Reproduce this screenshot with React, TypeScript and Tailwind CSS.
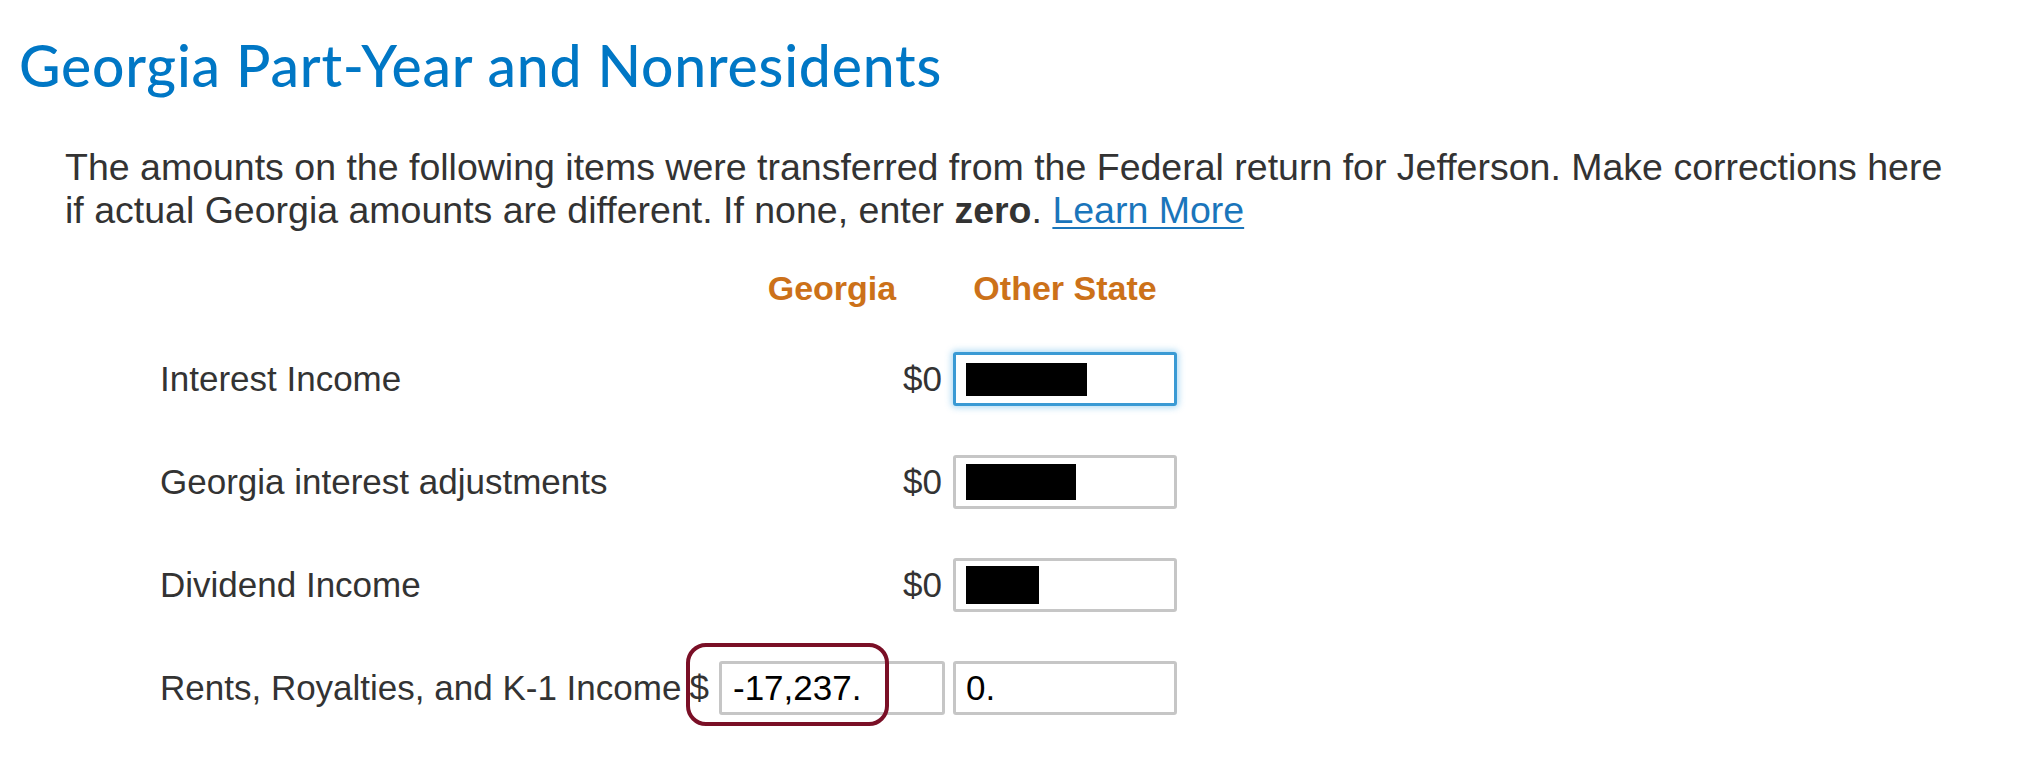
import React from "react";

const rows = [
  { label: "Interest Income", redact: "w-[121px] h-[33px]" },
  { label: "Georgia interest adjustments", redact: "w-[110px] h-[36px]" },
  { label: "Dividend Income", redact: "w-[73px] h-[38px]" },
];

function Box({ focused, children }: { focused?: boolean; children?: React.ReactNode }) {
  return (
    <div
      className={
        focused
          ? "flex h-[54px] w-[224px] items-center rounded-[3px] border-[3px] border-[#3a9ad4] bg-white pl-[10px] shadow-[0_0_6px_2px_rgba(90,180,230,0.45)]"
          : "flex h-[54px] w-[224px] items-center rounded-[3px] border-[3px] border-[#c6c6c6] bg-white pl-[10px] text-[35px] text-black"
      }
    >
      {children}
    </div>
  );
}

export default function App() {
  return (
    <div className="min-h-[757px] bg-white font-['Liberation_Sans',Arial,sans-serif] text-[#333]">
      <h1 className="pl-[19px] pt-[32px] font-['Lato',sans-serif] text-[57px] font-medium leading-[67px] tracking-[0.8px] text-[#0077c5]">
        Georgia Part-Year and Nonresidents
      </h1>

      <p className="mt-[47px] w-[1955px] pl-[65px] text-[37.5px] leading-[43px]">
        The amounts on the following items were transferred from the Federal return for Jefferson. Make corrections here if
        actual Georgia amounts are different. If none, enter <b className="font-bold">zero</b>.{" "}
        <a href="#" className="text-[#1a75bb] underline decoration-2 underline-offset-[4px]">
          Learn More
        </a>
      </p>

      <div className="mt-[33px] grid grid-cols-[519px_258px_224px] gap-x-[8px] gap-y-[49px] pl-[160px] text-[35px] leading-[54px]">
        <div className="h-[38px]" />
        <div className="flex h-[38px] justify-end">
          <div className="w-[226px] text-center text-[34px] font-bold leading-[46px] text-[#cc7119]">Georgia</div>
        </div>
        <div className="h-[38px] text-center text-[34px] font-bold leading-[46px] text-[#cc7119]">Other State</div>

        {rows.map((r, i) => (
          <React.Fragment key={r.label}>
            <div className="whitespace-nowrap">{r.label}</div>
            <div className="pr-[3px] text-right">$0</div>
            <Box focused={i === 0}>
              <div className={`${r.redact} bg-black`} />
            </Box>
          </React.Fragment>
        ))}

        <div className="whitespace-nowrap">Rents, Royalties, and K-1 Income</div>
        <div className="relative flex items-center justify-end gap-[10px]">
          <span>$</span>
          <div className="flex h-[54px] w-[226px] items-center rounded-[3px] border-[3px] border-[#c6c6c6] bg-white pl-[11px] text-black">
            -17,237.
          </div>
          <div className="pointer-events-none absolute left-[-1px] top-[-18px] h-[83px] w-[203px] rounded-[20px] border-[4px] border-[#7a0f26]" />
        </div>
        <Box>0.</Box>
      </div>
    </div>
  );
}
